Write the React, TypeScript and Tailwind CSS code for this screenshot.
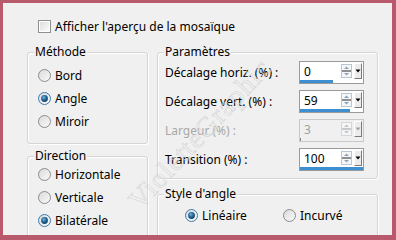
import React from "react";

function Radio({ checked }: { checked?: boolean }) {
  return (
    <svg width="13" height="13" viewBox="0 0 13 13" className="shrink-0">
      <defs>
        <linearGradient id="rg" x1="0" y1="0" x2="1" y2="1">
          <stop offset="0" stopColor="#d9d9d9" />
          <stop offset="1" stopColor="#fbfbfb" />
        </linearGradient>
        <radialGradient id="dot" cx="0.4" cy="0.35" r="0.7">
          <stop offset="0" stopColor="#6fb2e0" />
          <stop offset="0.6" stopColor="#1d5d8c" />
          <stop offset="1" stopColor="#0e3f66" />
        </radialGradient>
      </defs>
      <circle cx="6.5" cy="6.5" r="6" fill="url(#rg)" stroke={checked ? "#3d7bab" : "#8c8c8c"} />
      {checked && <circle cx="6.5" cy="6.5" r="3.4" fill="url(#dot)" />}
    </svg>
  );
}

function RadioItem({ label, checked }: { label: string; checked?: boolean }) {
  return (
    <div className="flex h-[23px] items-center gap-[4px]">
      <Radio checked={checked} />
      <span>{label}</span>
    </div>
  );
}

function GroupBox({ title, className, children }: { title: string; className?: string; children?: React.ReactNode }) {
  return (
    <div className={"rounded-[3px] border border-[#d5d5d5] shadow-[inset_1px_1px_0_#fff,1px_1px_0_#fff] " + (className ?? "")}>
      <div className="-mt-[9px] ml-[6px] h-[16px] w-fit bg-[#f0f0f0] px-[1px] leading-[16px]">{title}</div>
      {children}
    </div>
  );
}

function Spinner({ disabled }: { disabled?: boolean }) {
  const c = disabled ? "#c4c4c4" : "#8aa4bd";
  return (
    <svg width="11" height="14" viewBox="0 0 11 14" className="shrink-0">
      <rect x="0.5" y="0.5" width="10" height="13" fill="#f4f6f8" stroke={disabled ? "#d6d6d6" : "#b9c6d3"} />
      <line x1="1" y1="7" x2="10" y2="7" stroke={disabled ? "#9a9a9a" : "#2a2a2a"} />
      <path d="M3 5 L5.5 2.5 L8 5 Z" fill={c} />
      <path d="M3 9 L5.5 11.5 L8 9 Z" fill={c} />
    </svg>
  );
}

function Field({ value, pct, disabled }: { value: string; pct: number; disabled?: boolean }) {
  return (
    <div
      className={
        "flex h-[23px] w-[65px] flex-col border " +
        (disabled ? "border-[#c8c8c8] bg-[#f0f0f0]" : "border-[#9a9a9a] bg-white")
      }
    >
      <div className="flex flex-1 items-center">
        <span className={"flex-1 pl-[4px] pt-[2px] " + (disabled ? "text-[#9d9d9d]" : "text-black")}>{value}</span>
        <Spinner disabled={disabled} />
        <div className="ml-[2px] mr-[1px] flex h-[16px] w-[8px] items-center justify-center border border-t-white border-l-white border-r-[#7a7a7a] border-b-[#7a7a7a] bg-[#ececec]">
          <svg width="6" height="4" viewBox="0 0 6 4">
            <path d="M0.5 0.5 L5.5 0.5 L3 3.5 Z" fill={disabled ? "#a0a0a0" : "#000"} />
          </svg>
        </div>
      </div>
      <div className="h-[3px] w-full">
        <div className={"h-full " + (disabled ? "bg-[#8a8a8a]" : "bg-[#3d8fd1]")} style={{ width: pct + "%" }} />
      </div>
    </div>
  );
}

function ParamRow({ label, value, pct, disabled }: { label: string; value: string; pct: number; disabled?: boolean }) {
  return (
    <div className="flex h-[29px] items-center pl-[7px]">
      <span className={"w-[134px] " + (disabled ? "text-[#a8a8a8]" : "text-black")}>{label}</span>
      <Field value={value} pct={pct} disabled={disabled} />
    </div>
  );
}

export default function App() {
  return (
    <div className="relative h-[240px] w-[396px] overflow-hidden border-t-[3px] border-l-[3px] border-r-[4px] border-b-[5px] border-[#b9596c] bg-[#f0f0f0] font-['Noto_Sans',sans-serif] text-[12px] leading-[16px] text-black">
      {/* preview checkbox */}
      <div className="mt-[17px] flex h-[13px] items-center gap-[4px] pl-[35px]">
        <svg width="13" height="13" viewBox="0 0 13 13" className="shrink-0">
          <defs>
            <linearGradient id="cb" x1="0" y1="0" x2="1" y2="1">
              <stop offset="0" stopColor="#dedede" />
              <stop offset="1" stopColor="#fafafa" />
            </linearGradient>
          </defs>
          <rect x="0.5" y="0.5" width="12" height="12" fill="#fff" stroke="#8e8f8f" />
          <rect x="2" y="2" width="9" height="9" fill="url(#cb)" />
        </svg>
        <span>Afficher l'aperçu de la mosaïque</span>
      </div>

      <div className="mt-[19px] flex gap-[9px] pl-[24px]">
        {/* left column */}
        <div className="flex w-[121px] flex-col">
          <GroupBox title="Méthode" className="h-[92px]">
            <div className="mt-[4px] pl-[10px]">
              <RadioItem label="Bord" />
              <RadioItem label="Angle" checked />
              <RadioItem label="Miroir" />
            </div>
          </GroupBox>
          <GroupBox title="Direction" className="mt-[12px] h-[100px]">
            <div className="-mt-[1px] pl-[10px]">
              <RadioItem label="Horizontale" />
              <RadioItem label="Verticale" />
              <RadioItem label="Bilatérale" checked />
            </div>
          </GroupBox>
        </div>

        {/* right column */}
        <div className="flex w-[221px] flex-col">
          <GroupBox title="Paramètres" className="h-[127px]">
            <div className="-mt-[2px]">
              <ParamRow label="Décalage horiz. (%) :" value="0" pct={52} />
              <ParamRow label="Décalage vert. (%) :" value="59" pct={80} />
              <ParamRow label="Largeur (%) :" value="3" pct={2} disabled />
              <ParamRow label="Transition (%) :" value="100" pct={100} />
            </div>
          </GroupBox>
          <GroupBox title="Style d'angle" className="mt-[15px] h-[60px]">
            <div className="mt-[2px] flex pl-[27px]">
              <div className="w-[98px]">
                <RadioItem label="Linéaire" checked />
              </div>
              <RadioItem label="Incurvé" />
            </div>
          </GroupBox>
        </div>
      </div>

      {/* watermark */}
      <div className="pointer-events-none absolute left-[62px] top-[116px] w-[270px] -rotate-[47deg] text-center font-['Liberation_Serif',serif] text-[28px] leading-[30px] tracking-[1px] text-transparent [-webkit-text-stroke:0.6px_#d6d6d6]">
        VioletteGraphic
      </div>
    </div>
  );
}
